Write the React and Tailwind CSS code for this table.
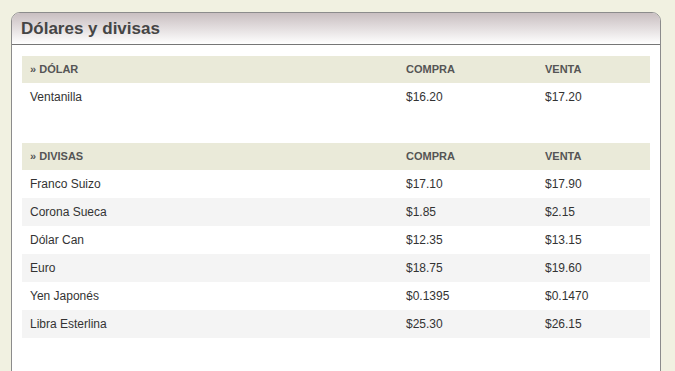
import React from "react";

const dolar = [["Ventanilla", "$16.20", "$17.20"]];
const divisas = [
  ["Franco Suizo", "$17.10", "$17.90"],
  ["Corona Sueca", "$1.85", "$2.15"],
  ["Dólar Can", "$12.35", "$13.15"],
  ["Euro", "$18.75", "$19.60"],
  ["Yen Japonés", "$0.1395", "$0.1470"],
  ["Libra Esterlina", "$25.30", "$26.15"],
];

function Table({ title, rows }) {
  return (
    <div className="w-[628px]">
      <div className="flex h-[27px] items-center bg-[#eaead9] text-[11px] font-bold text-[#555]">
        <div className="w-[376px] pl-[8px]">» {title}</div>
        <div className="w-[139px] pl-[8px]">COMPRA</div>
        <div className="flex-1 pl-[8px]">VENTA</div>
      </div>
      {rows.map((r, i) => (
        <div
          key={r[0]}
          className={
            "flex h-[28px] items-center text-[12px] text-[#333] " +
            (i % 2 === 1 ? "bg-[#f4f4f4]" : "bg-white")
          }
        >
          <div className="w-[376px] pl-[8px]">{r[0]}</div>
          <div className="w-[139px] pl-[8px]">{r[1]}</div>
          <div className="flex-1 pl-[8px]">{r[2]}</div>
        </div>
      ))}
    </div>
  );
}

export default function App() {
  return (
    <div
      className="h-[371px] w-[675px] overflow-hidden bg-[#f1f1e1] pl-[11px] pt-[12px]"
      style={{ fontFamily: '"Liberation Sans", Arial, sans-serif' }}
    >
      <div className="h-[400px] w-[650px] rounded-t-[9px] border border-[#8c8c8c] bg-white">
        <div className="flex h-[32px] items-center rounded-t-[8px] border-b border-[#767676] bg-gradient-to-b from-[#c9bfc1] to-white pl-[9px]">
          <span className="text-[17px] font-bold text-[#454545]">Dólares y divisas</span>
        </div>
        <div className="flex flex-col gap-[32px] pl-[10px] pt-[11px]">
          <Table title="DÓLAR" rows={dolar} />
          <Table title="DIVISAS" rows={divisas} />
        </div>
      </div>
    </div>
  );
}
